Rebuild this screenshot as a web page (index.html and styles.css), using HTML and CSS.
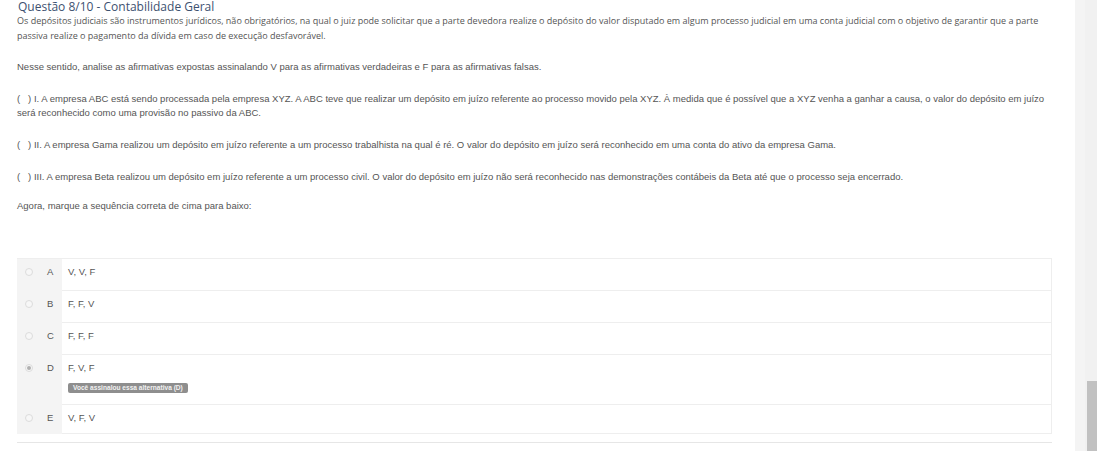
FILE: index.html
```html
<!DOCTYPE html>
<html lang="pt-BR">
<head>
<meta charset="utf-8">
<title>Questão 8/10 - Contabilidade Geral</title>
<link rel="stylesheet" href="styles.css">
</head>
<body>
<div class="page">
  <main class="content">
    <h1 class="title">Questão 8/10 - Contabilidade Geral</h1>
    <p class="intro">Os depósitos judiciais são instrumentos jurídicos, não obrigatórios, na qual o juiz pode solicitar que a parte devedora realize o depósito do valor disputado em algum processo judicial em uma conta judicial com o objetivo de garantir que a parte passiva realize o pagamento da dívida em caso de execução desfavorável.</p>
    <div class="statement">
      <p>Nesse sentido, analise as afirmativas expostas assinalando V para as afirmativas verdadeiras e F para as afirmativas falsas.</p>
      <p>(&nbsp;&nbsp;&nbsp;) I. A empresa ABC está sendo processada pela empresa XYZ. A ABC teve que realizar um depósito em juízo referente ao processo movido pela XYZ. À medida que é possível que a XYZ venha a ganhar a causa, o valor do depósito em juízo será reconhecido como uma provisão no passivo da ABC.</p>
      <p>(&nbsp;&nbsp;&nbsp;) II. A empresa Gama realizou um depósito em juízo referente a um processo trabalhista na qual é ré. O valor do depósito em juízo será reconhecido em uma conta do ativo da empresa Gama.</p>
      <p>(&nbsp;&nbsp;&nbsp;) III. A empresa Beta realizou um depósito em juízo referente a um processo civil. O valor do depósito em juízo não será reconhecido nas demonstrações contábeis da Beta até que o processo seja encerrado.</p>
      <p class="prompt">Agora, marque a sequência correta de cima para baixo:</p>
    </div>
    <ul class="options">
      <li class="option">
        <div class="opt-side"><span class="radio"></span><span class="letter">A</span></div>
        <div class="opt-body"><span class="opt-text">V, V, F</span></div>
      </li>
      <li class="option">
        <div class="opt-side"><span class="radio"></span><span class="letter">B</span></div>
        <div class="opt-body"><span class="opt-text">F, F, V</span></div>
      </li>
      <li class="option">
        <div class="opt-side"><span class="radio"></span><span class="letter">C</span></div>
        <div class="opt-body"><span class="opt-text">F, F, F</span></div>
      </li>
      <li class="option">
        <div class="opt-side"><span class="radio checked"></span><span class="letter">D</span></div>
        <div class="opt-body tall"><span class="opt-text">F, V, F</span><span class="badge">Você assinalou essa alternativa (D)</span></div>
      </li>
      <li class="option last">
        <div class="opt-side"><span class="radio"></span><span class="letter">E</span></div>
        <div class="opt-body"><span class="opt-text">V, F, V</span></div>
      </li>
    </ul>
    <div class="bottom-rule"></div>
  </main>
  <div class="gutter"></div>
  <div class="scrollbar"><div class="track-space"></div><div class="thumb"></div></div>
</div>
</body>
</html>
```

FILE: styles.css
```css
html, body {
  margin: 0;
  padding: 0;
  background: #ffffff;
}

.page {
  display: flex;
  height: 451px;
  overflow: hidden;
}

.content {
  flex: 1;
  padding: 0 23px 0 17px;
  min-width: 0;
}

.title {
  margin: 0;
  font-family: "Open Sans", "Noto Sans", sans-serif;
  font-weight: 400;
  font-size: 12px;
  line-height: 14px;
  color: #3d5170;
  padding-left: 1px;
}

.intro {
  margin: 0 0 17px 0;
  font-family: "Open Sans", "Noto Sans", sans-serif;
  font-size: 9px;
  line-height: 14.5px;
  color: #555555;
}

.statement p {
  margin: 0 0 18px 0;
  font-family: "Liberation Sans", Arial, sans-serif;
  font-size: 9.5px;
  line-height: 14px;
  color: #555555;
}

.statement p.prompt {
  margin-top: -3px;
  margin-bottom: 45px;
}

.options {
  list-style: none;
  margin: 0;
  padding: 0;
  border-top: 1px solid #eeeeee;
  font-family: "Liberation Sans", Arial, sans-serif;
  font-size: 9.5px;
  color: #555555;
}

.option {
  display: flex;
}

.opt-side {
  width: 45px;
  flex: none;
  background: #f4f4f4;
  display: flex;
  align-items: flex-start;
  padding-top: 9px;
  box-sizing: border-box;
}

.radio {
  width: 8px;
  height: 8px;
  box-sizing: border-box;
  border: 1px solid #dcdcdc;
  border-radius: 50%;
  background: #f7f7f7;
  margin-left: 8px;
  display: flex;
  align-items: center;
  justify-content: center;
}

.radio.checked::after {
  content: "";
  width: 4px;
  height: 4px;
  border-radius: 50%;
  background: #b0b0b0;
}

.letter {
  margin-left: 14px;
  line-height: 8px;
}

.opt-body {
  flex: 1;
  display: flex;
  flex-direction: column;
  align-items: flex-start;
  padding: 6px 6px 11px 6px;
  border-bottom: 1px solid #eeeeee;
  border-right: 1px solid #eeeeee;
}

.opt-text {
  line-height: 14px;
}

.option.last .opt-body {
  padding-bottom: 8px;
}

.badge {
  margin-top: 8px;
  height: 10px;
  line-height: 10px;
  padding: 0 5px;
  border-radius: 2px;
  background: #8e8e8e;
  color: #f2f2f2;
  font-weight: 700;
  font-size: 6.6px;
}

.bottom-rule {
  margin-top: 8px;
  height: 1px;
  background: #e6e6e6;
}

.gutter {
  width: 10px;
  flex: none;
  background: #f4f4f4;
}

.scrollbar {
  width: 12px;
  flex: none;
  background: #f1f1f1;
  display: flex;
  flex-direction: column;
  align-items: flex-end;
}

.track-space {
  height: 381px;
  flex: none;
}

.thumb {
  width: 10px;
  flex: 1;
  background: #c1c1c1;
}
```
